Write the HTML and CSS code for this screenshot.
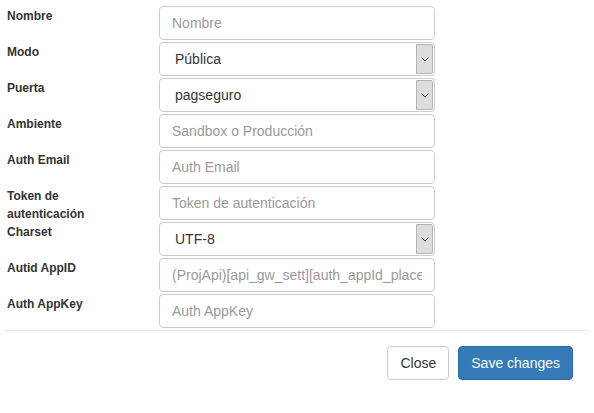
FILE: index.html
```html
<!DOCTYPE html>
<html lang="es">
<head>
  <meta charset="UTF-8" />
  <title>Gateway</title>
  <link rel="stylesheet" href="styles.css">
</head>
<body>
<div class="modal-body">
  <form class="form">
    <div class="row">
      <label>Nombre</label>
      <input class="control" type="text" placeholder="Nombre" />
    </div>
    <div class="row">
      <label>Modo</label>
      <div class="select">
        <select><option>Pública</option><option>Privada</option></select>
        <span class="arrow"><svg width="8" height="5" viewBox="0 0 8 5"><polyline points="0.5,0.5 4,4 7.5,0.5" fill="none" stroke="#444" stroke-width="1"/></svg></span>
      </div>
    </div>
    <div class="row">
      <label>Puerta</label>
      <div class="select">
        <select><option>pagseguro</option></select>
        <span class="arrow"><svg width="8" height="5" viewBox="0 0 8 5"><polyline points="0.5,0.5 4,4 7.5,0.5" fill="none" stroke="#444" stroke-width="1"/></svg></span>
      </div>
    </div>
    <div class="row">
      <label>Ambiente</label>
      <input class="control" type="text" placeholder="Sandbox o Producción" />
    </div>
    <div class="row">
      <label>Auth Email</label>
      <input class="control" type="text" placeholder="Auth Email" />
    </div>
    <div class="row">
      <label>Token de autenticación</label>
      <input class="control" type="text" placeholder="Token de autenticación" />
    </div>
    <div class="row">
      <label>Charset</label>
      <div class="select">
        <select><option>UTF-8</option></select>
        <span class="arrow"><svg width="8" height="5" viewBox="0 0 8 5"><polyline points="0.5,0.5 4,4 7.5,0.5" fill="none" stroke="#444" stroke-width="1"/></svg></span>
      </div>
    </div>
    <div class="row">
      <label>Autid AppID</label>
      <input class="control" type="text" placeholder="(ProjApi)[api_gw_sett][auth_appId_placeholder]" />
    </div>
    <div class="row">
      <label>Auth AppKey</label>
      <input class="control" type="text" placeholder="Auth AppKey" />
    </div>
  </form>
</div>
<div class="modal-footer">
  <button class="btn btn-default" type="button">Close</button>
  <button class="btn btn-primary" type="button">Save changes</button>
</div>
</body>
</html>
```

FILE: styles.css
```css
*{margin: 0;padding: 0;box-sizing: border-box;}
body{color: #333;font: 14px/20px "Liberation Sans", Arial, sans-serif;background: #fff;}
.modal-body{padding: 6px 0 0 7px;}
.row{display: grid;grid-template-columns: 152px 276px;height: 34px;margin-bottom: 2px;}
.row label{font-size: 12px;line-height: 18px;font-weight: bold;padding-top: 1px;padding-right: 20px;}
.control{height: 34px;padding: 6px 12px;border: 1px solid #ccc;border-radius: 4px;font: inherit;color: #555;outline: none;}
.control::placeholder{color: #999;opacity: 1;}
.select{display: flex;height: 34px;border: 1px solid #ccc;border-radius: 4px;background: #fff;}
.select select{flex: 1;min-width: 0;appearance: none;-webkit-appearance: none;border: none;background: transparent;font: inherit;color: #333;padding: 0 15px;outline: none;}
.select .arrow{display: flex;align-items: center;justify-content: center;width: 17px;margin: 1px 1px 1px 0;background: #ddd;border: 1px solid #b4b4b4;border-radius: 0 2px 2px 0;}
.modal-footer{margin: 0 6px 0 5px;padding: 15px 15px 0 0;border-top: 1px solid #e5e5e5;display: flex;justify-content: flex-end;gap: 9px;}
.btn{height: 34px;padding: 6px 12px;font: inherit;border: 1px solid transparent;border-radius: 4px;cursor: pointer;}
.btn-default{color: #333;background: #fff;border-color: #ccc;}
.btn-primary{color: #fff;background: #337ab7;border-color: #2e6da4;}
```
